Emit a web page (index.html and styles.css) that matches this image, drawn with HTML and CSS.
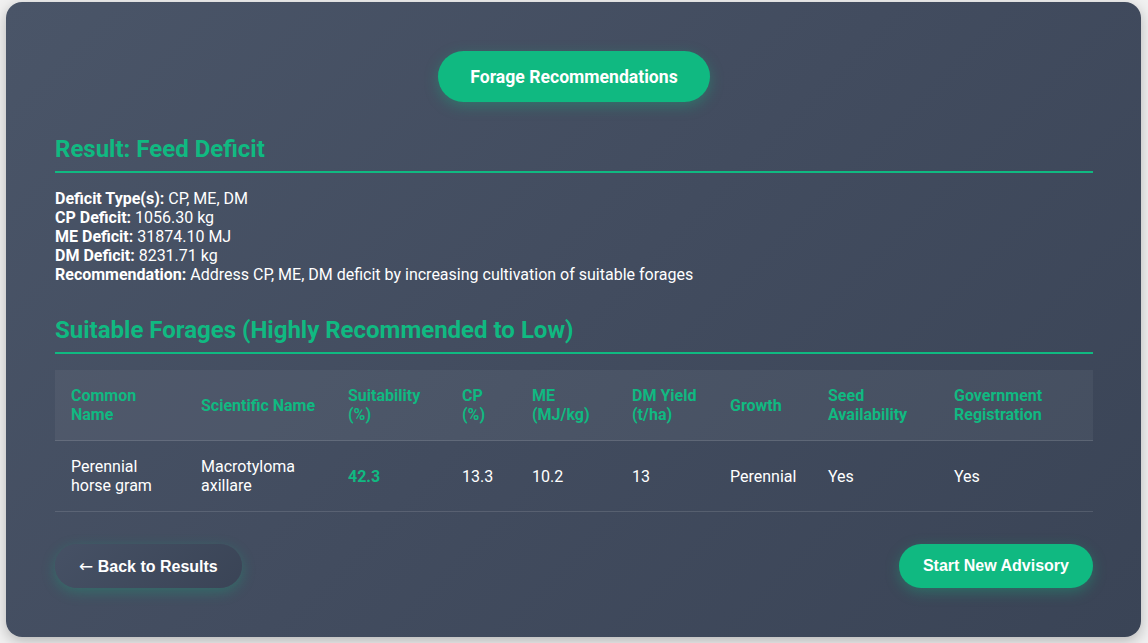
FILE: index.html
```html
<!DOCTYPE html>
<html lang="en">
<head>
<meta charset="utf-8">
<title>Forage Recommendations</title>
<link rel="stylesheet" href="styles.css">
</head>
<body>
<div class="card">
  <div class="title-wrap">
    <div class="pill-title">Forage Recommendations</div>
  </div>

  <h2 class="section-heading">Result: Feed Deficit</h2>
  <div class="deficit">
    <div><strong>Deficit Type(s):</strong> CP, ME, DM</div>
    <div><strong>CP Deficit:</strong> 1056.30 kg</div>
    <div><strong>ME Deficit:</strong> 31874.10 MJ</div>
    <div><strong>DM Deficit:</strong> 8231.71 kg</div>
    <div><strong>Recommendation:</strong> Address CP, ME, DM deficit by increasing cultivation of suitable forages</div>
  </div>

  <h2 class="section-heading second">Suitable Forages (Highly Recommended to Low)</h2>
  <table class="forage-table">
    <colgroup>
      <col class="c1"><col class="c2"><col class="c3"><col class="c4"><col class="c5"><col class="c6"><col class="c7"><col class="c8"><col class="c9">
    </colgroup>
    <thead>
      <tr>
        <th>Common<br>Name</th>
        <th>Scientific Name</th>
        <th>Suitability<br>(%)</th>
        <th>CP<br>(%)</th>
        <th>ME<br>(MJ/kg)</th>
        <th>DM Yield<br>(t/ha)</th>
        <th>Growth</th>
        <th>Seed<br>Availability</th>
        <th>Government<br>Registration</th>
      </tr>
    </thead>
    <tbody>
      <tr>
        <td>Perennial<br>horse gram</td>
        <td>Macrotyloma<br>axillare</td>
        <td class="score">42.3</td>
        <td>13.3</td>
        <td>10.2</td>
        <td>13</td>
        <td>Perennial</td>
        <td>Yes</td>
        <td>Yes</td>
      </tr>
    </tbody>
  </table>

  <div class="actions">
    <button class="btn btn-back"><span class="arrow">&larr;</span> Back to Results</button>
    <button class="btn btn-new">Start New Advisory</button>
  </div>
</div>
</body>
</html>
```

FILE: styles.css
```css
* { box-sizing: border-box; }

html, body {
  margin: 0;
  padding: 0;
}

body {
  background: #f1f1f1;
  font-family: Roboto, "Liberation Sans", Arial, sans-serif;
  color: #ffffff;
  width: 1148px;
  height: 643px;
  overflow: hidden;
}

.card {
  margin: 2px 7px 0 6px;
  width: 1135px;
  height: 635px;
  border-radius: 16px;
  background: linear-gradient(135deg, #4a5568 0%, #424c5f 50%, #3a4456 100%);
  box-shadow: 0 4px 14px rgba(0, 0, 0, 0.25);
  padding: 49px 48px 48px 49px;
}

.title-wrap {
  display: flex;
  justify-content: center;
}

.pill-title {
  background: #10b981;
  color: #fff;
  font-weight: 700;
  font-size: 17.6px;
  height: 51px;
  padding: 0 32px;
  display: flex;
  align-items: center;
  border-radius: 26px;
  box-shadow: 0 4px 14px rgba(16, 185, 129, 0.35);
}

.section-heading {
  margin: 33px 0 16px;
  color: #10b981;
  font-size: 24px;
  font-weight: 700;
  line-height: 28px;
  padding-bottom: 8px;
  border-bottom: 2px solid #10b981;
}

.section-heading.second {
  margin-top: 32px;
}

.deficit {
  font-size: 16px;
  line-height: 19px;
}

.deficit strong {
  font-weight: 700;
}

.forage-table {
  width: 100%;
  border-collapse: collapse;
  table-layout: fixed;
  font-size: 16px;
}

.c1 { width: 130px; }
.c2 { width: 147px; }
.c3 { width: 114px; }
.c4 { width: 70px; }
.c5 { width: 100px; }
.c6 { width: 98px; }
.c7 { width: 98px; }
.c8 { width: 126px; }
.c9 { width: 155px; }

.forage-table thead tr {
  background: rgba(255, 255, 255, 0.05);
}

.forage-table th {
  text-align: left;
  color: #10b981;
  font-weight: 700;
  line-height: 19px;
  padding: 16px;
  height: 70px;
  border-bottom: 1px solid rgba(255, 255, 255, 0.12);
  vertical-align: middle;
}

.forage-table td {
  line-height: 19px;
  padding: 16px;
  height: 71px;
  border-bottom: 1px solid rgba(255, 255, 255, 0.12);
  vertical-align: middle;
  color: #fff;
}

.forage-table td.score {
  color: #10b981;
  font-weight: 700;
}

.actions {
  margin-top: 32px;
  display: flex;
  justify-content: space-between;
}

.btn {
  font-family: "Liberation Sans", Arial, sans-serif;
  font-weight: 700;
  font-size: 16px;
  color: #fff;
  height: 44px;
  border: none;
  border-radius: 22px;
  padding: 0 24px;
  cursor: pointer;
}

.arrow {
  font-family: "DejaVu Sans", sans-serif;
  font-weight: 400;
  font-size: 17px;
}

.btn-back {
  background: linear-gradient(135deg, #465165, #3a4456);
  box-shadow: 0 4px 14px rgba(16, 185, 129, 0.3);
}

.btn-new {
  background: #10b981;
  box-shadow: 0 4px 14px rgba(16, 185, 129, 0.35);
}
```
